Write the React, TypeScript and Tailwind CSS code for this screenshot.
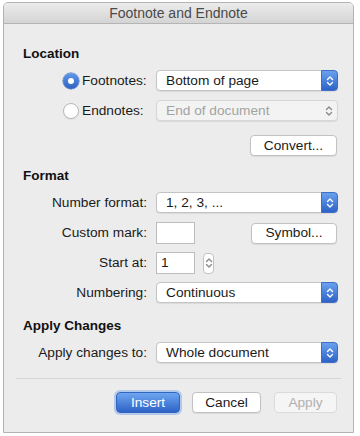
import React from "react"

const font = { fontFamily: '"Liberation Sans", Arial, sans-serif' }

function Chevrons({ light }: { light?: boolean }) {
  const c = light ? "#ffffff" : "#8a8a8a"
  return (
    <svg width="8" height="12" viewBox="0 0 8 12" fill="none">
      <path d="M1.5 4.5 L4 2 L6.5 4.5" stroke={c} strokeWidth="1.4" strokeLinecap="round" strokeLinejoin="round" />
      <path d="M1.5 7.5 L4 10 L6.5 7.5" stroke={c} strokeWidth="1.4" strokeLinecap="round" strokeLinejoin="round" />
    </svg>
  )
}

function Select({ value, disabled }: { value: string; disabled?: boolean }) {
  return (
    <div
      className={`flex h-[21px] w-[182px] items-center justify-between rounded-[4px] border shadow-[0_1px_1px_rgba(0,0,0,0.08)] ${
        disabled ? "border-[#d6d6d6] bg-[#f3f3f3]" : "border-[#c4c4c4] bg-white"
      }`}
    >
      <span className={`pl-[9px] text-[13.7px] leading-[16px] ${disabled ? "text-[#a3a3a3]" : "text-[#1a1a1a]"}`}>
        {value}
      </span>
      {disabled ? (
        <div className="flex h-full w-[17px] items-center justify-center">
          <Chevrons />
        </div>
      ) : (
        <div className="-mr-px -my-px flex h-[21px] w-[17px] items-center justify-center rounded-r-[4px] border border-[#3f6fc4] bg-gradient-to-b from-[#6aa1ee] to-[#2e63c6]">
          <Chevrons light />
        </div>
      )}
    </div>
  )
}

function Button({ label, w, variant }: { label: string; w: string; variant?: "primary" | "disabled" }) {
  const cls =
    variant === "primary"
      ? "border-[#3465be] bg-gradient-to-b from-[#6fa6f0] to-[#2d62c6] text-white shadow-[0_0_0_2px_rgba(110,160,230,0.45)]"
      : variant === "disabled"
      ? "border-[#dadada] bg-[#f5f5f5] text-[#b0b0b0]"
      : "border-[#c2c2c2] bg-white text-[#1a1a1a] shadow-[0_1px_1px_rgba(0,0,0,0.08)]"
  return (
    <div className={`flex h-[21px] ${w} items-center justify-center rounded-[4px] border text-[13.7px] leading-[16px] ${cls}`}>
      {label}
    </div>
  )
}

function Row({ label, children, className = "" }: { label: React.ReactNode; children: React.ReactNode; className?: string }) {
  return (
    <div className={`flex items-center ${className}`}>
      <div className="flex w-[143px] items-center justify-end text-[13.7px] leading-[16px] text-[#1a1a1a]">{label}</div>
      <div className="ml-[9px] flex flex-1 items-center">{children}</div>
    </div>
  )
}

function RadioRow({ label, checked, children, className = "" }: { label: string; checked?: boolean; children: React.ReactNode; className?: string }) {
  return (
    <div className={`flex items-center ${className}`}>
      <div className="ml-[59px] flex w-[84px] items-center gap-[3px] text-[13.7px] leading-[16px] text-[#1a1a1a]">
        {checked ? (
          <div className="flex h-[16px] w-[16px] items-center justify-center rounded-full bg-gradient-to-b from-[#6198e8] to-[#2f62c2] shadow-[0_0_0_0.5px_#3a67b8]">
            <div className="h-[6px] w-[6px] rounded-full bg-white" />
          </div>
        ) : (
          <div className="h-[16px] w-[16px] rounded-full border border-[#b8b8b8] bg-white shadow-[0_1px_1px_rgba(0,0,0,0.06)]" />
        )}
        {label}
      </div>
      <div className="ml-[9px] flex flex-1 items-center">{children}</div>
    </div>
  )
}

function Heading({ children, className = "" }: { children: React.ReactNode; className?: string }) {
  return <div className={`ml-[19px] text-[13.5px] font-bold leading-[16px] text-[#111] ${className}`}>{children}</div>
}

export default function App() {
  return (
    <div className="h-[436px] w-[360px] bg-white" style={font}>
      <div className="ml-[3px] mt-[2px] flex h-[431px] w-[351px] flex-col overflow-hidden rounded-t-[5px] border border-[#b3b3b3] bg-[#ececec]">
        <div className="flex h-[21px] items-center justify-center border-b border-[#b4b4b4] bg-gradient-to-b from-[#ececec] to-[#d4d4d4] text-[14px] leading-[16px] text-[#4a4a4a]">
          Footnote and Endnote
        </div>

        <div className="flex flex-1 flex-col">
          <Heading className="mt-[22px]">Location</Heading>

          <RadioRow className="mt-[8px]" label="Footnotes:" checked>
            <Select value="Bottom of page" />
          </RadioRow>

          <RadioRow className="mt-[9px]" label="Endnotes:">
            <Select value="End of document" disabled />
          </RadioRow>

          <div className="mt-[14px] flex justify-end pr-[16px]">
            <Button label="Convert..." w="w-[87px]" />
          </div>

          <Heading className="mt-[12px]">Format</Heading>

          <Row className="mt-[8px]" label="Number format:">
            <Select value="1, 2, 3, ..." />
          </Row>

          <Row className="mt-[9px]" label="Custom mark:">
            <div className="h-[22px] w-[39px] border border-[#bdbdbd] bg-white" />
            <div className="ml-auto mr-[16px]">
              <Button label="Symbol..." w="w-[86px]" />
            </div>
          </Row>

          <Row className="mt-[8px]" label="Start at:">
            <div className="flex h-[22px] w-[39px] items-center border border-[#bdbdbd] bg-white pl-[4px] text-[13.7px] leading-[16px] text-[#1a1a1a]">
              1
            </div>
            <div className="ml-[8px] flex h-[21px] w-[11px] items-center justify-center rounded-[4px] border border-[#c2c2c2] bg-white">
              <Chevrons />
            </div>
          </Row>

          <Row className="mt-[8px]" label="Numbering:">
            <Select value="Continuous" />
          </Row>

          <Heading className="mt-[15px]">Apply Changes</Heading>

          <Row className="mt-[8px]" label="Apply changes to:">
            <Select value="Whole document" />
          </Row>

          <div className="mx-[12px] mt-[15px] h-px bg-[#d6d6d6]" />

          <div className="mt-[13px] flex justify-end pr-[16px]">
            <Button label="Insert" w="w-[64px]" variant="primary" />
            <div className="ml-[12px]">
              <Button label="Cancel" w="w-[69px]" />
            </div>
            <div className="ml-[13px]">
              <Button label="Apply" w="w-[63px]" variant="disabled" />
            </div>
          </div>
        </div>
      </div>
    </div>
  )
}
